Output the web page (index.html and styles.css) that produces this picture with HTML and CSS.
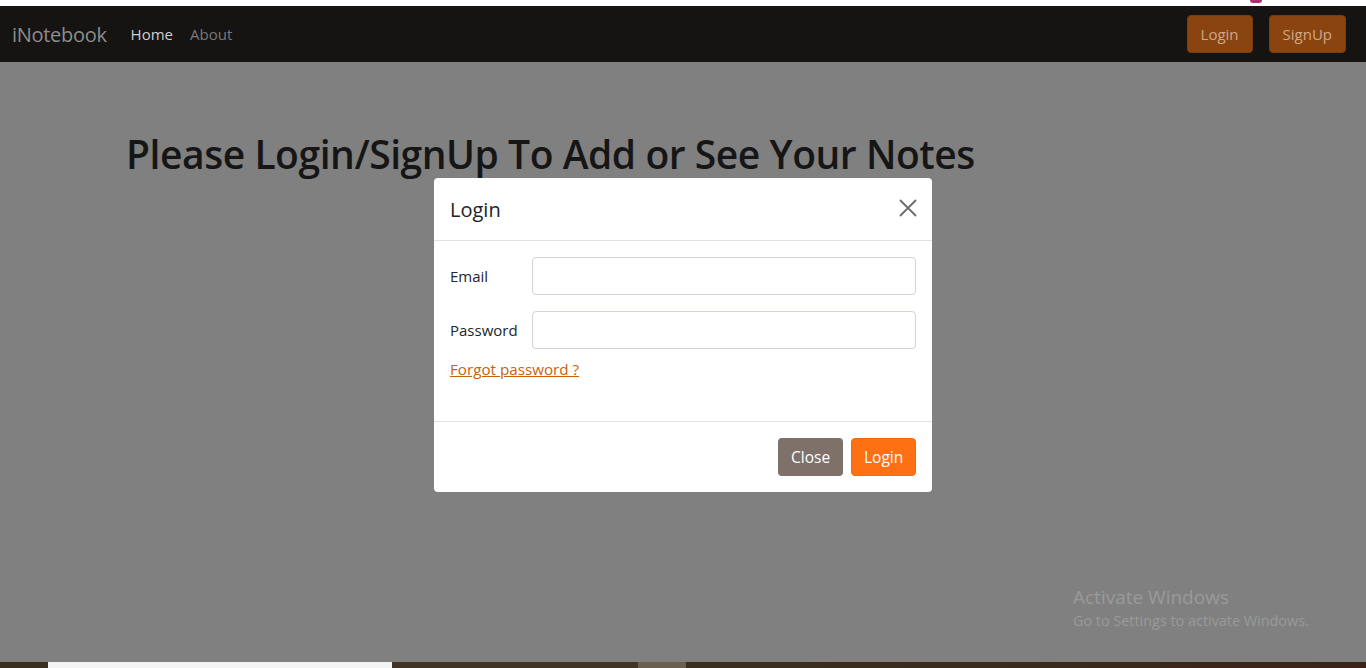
FILE: index.html
```html
<!DOCTYPE html>
<html>
<head>
<meta charset="utf-8">
<link rel="stylesheet" href="styles.css">
</head>
<body>
<div class="topstrip"><span class="dot"></span></div>
<nav class="navbar">
  <a class="brand">iNotebook</a>
  <a class="nav-link active">Home</a>
  <a class="nav-link">About</a>
  <div class="nav-right">
    <button class="nbtn">Login</button>
    <button class="nbtn">SignUp</button>
  </div>
</nav>
<main class="content">
  <h1 class="heading">Please Login/SignUp To Add or See Your Notes</h1>
  <div class="watermark">
    <div class="wm1">Activate Windows</div>
    <div class="wm2">Go to Settings to activate Windows.</div>
  </div>
</main>
<div class="taskbar">
  <span class="tb-a"></span><span class="tb-b"></span><span class="tb-c"></span><span class="tb-d"></span><span class="tb-e"></span>
</div>
<div class="modal">
  <div class="modal-header">
    <div class="modal-title">Login</div>
    <svg class="close-x" width="18" height="18" viewBox="0 0 18 18"><path d="M1 1L17 17M17 1L1 17" stroke="#6c6c6c" stroke-width="1.8" fill="none"/></svg>
  </div>
  <div class="modal-body">
    <div class="row"><label>Email</label><input class="field" type="text"></div>
    <div class="row"><label>Password</label><input class="field" type="password"></div>
    <a class="forgot">Forgot password ?</a>
  </div>
  <div class="modal-footer">
    <button class="btn btn-close">Close</button>
    <button class="btn btn-login">Login</button>
  </div>
</div>
</body>
</html>
```
FILE: styles.css
```css
* { box-sizing: border-box; }
html, body { margin: 0; padding: 0; height: 100%; overflow: hidden; }
body {
  font-family: "Open Sans", "Noto Sans", sans-serif;
  background: #808080;
  position: relative;
  height: 668px;
  display: flex;
  flex-direction: column;
}
.topstrip { height: 6px; background: #ffffff; position: relative; }
.dot { position: absolute; left: 1250px; top: 0; width: 12px; height: 3px; background: #b0306a; border-radius: 0 0 6px 6px; }
.navbar {
  height: 56px;
  background: #161412;
  display: flex;
  align-items: center;
  padding: 0 20px 0 12px;
}
.brand { color: #8d8d8d; font-size: 20px; margin-right: 24px; letter-spacing: -0.3px; }
.nav-link { font-size: 15px; margin-right: 17px; color: #787878; }
.nav-link.active { color: #cfcfcf; }
.nav-right { margin-left: auto; display: flex; gap: 16px; }
.nbtn {
  font-family: inherit;
  font-size: 15px;
  height: 38px;
  padding: 0 13px;
  background: #8a4410;
  color: #cfa88a;
  border: 1px solid #7a3c0e;
  border-radius: 4px;
}
.content { flex: 1; position: relative; }
.heading {
  margin: 0;
  padding: 65px 0 0 126px;
  font-size: 39px;
  font-weight: 600;
  color: #161616;
  letter-spacing: -0.45px;
}
.watermark { position: absolute; left: 1073px; top: 522px; color: #9a9a9a; }
.wm1 { font-size: 19px; }
.wm2 { font-size: 14.4px; margin-top: 1px; }
.taskbar { height: 6px; display: flex; background: #3a3020; }
.taskbar span { display: block; height: 6px; }
.tb-a { width: 48px; background: #3a3020; }
.tb-b { width: 344px; background: #f4f4f4; }
.tb-c { width: 246px; background: #403424; }
.tb-d { width: 48px; background: #6a6050; }
.tb-e { flex: 1; background: linear-gradient(90deg, #3a3020, #3a2418); }
.modal {
  position: absolute;
  left: 434px;
  top: 178px;
  width: 498px;
  height: 314px;
  background: #fff;
  border-radius: 4px;
  display: flex;
  flex-direction: column;
}
.modal-header {
  height: 63px;
  border-bottom: 1px solid #dee2e6;
  display: flex;
  align-items: center;
  justify-content: space-between;
  padding: 0 16px;
}
.modal-title { font-size: 20px; color: #212529; }
.close-x { margin-right: -1px; margin-top: -2px; }
.modal-body { flex: 1; padding: 16px 16px 0; }
.row { display: flex; align-items: center; margin-bottom: 16px; }
.row label { width: 82px; font-size: 15px; color: #212529; }
.field {
  width: 384px;
  height: 38px;
  border: 1px solid #ced4da;
  border-radius: 4px;
}
.forgot { display: block; margin-top: -6px; font-size: 15.2px; color: #c8620f; text-decoration: underline; }
.modal-footer {
  height: 71px;
  border-top: 1px solid #dee2e6;
  display: flex;
  justify-content: flex-end;
  align-items: center;
  padding: 0 16px;
  gap: 8px;
}
.btn {
  font-family: inherit;
  font-size: 15.5px;
  height: 38px;
  padding: 0 12px;
  border-radius: 4px;
  color: #fff;
  border: 1px solid transparent;
}
.btn-close { background: #7d716a; width: 65px; }
.btn-login { background: #fd7014; border-color: #f06a10; width: 65px; }
```
